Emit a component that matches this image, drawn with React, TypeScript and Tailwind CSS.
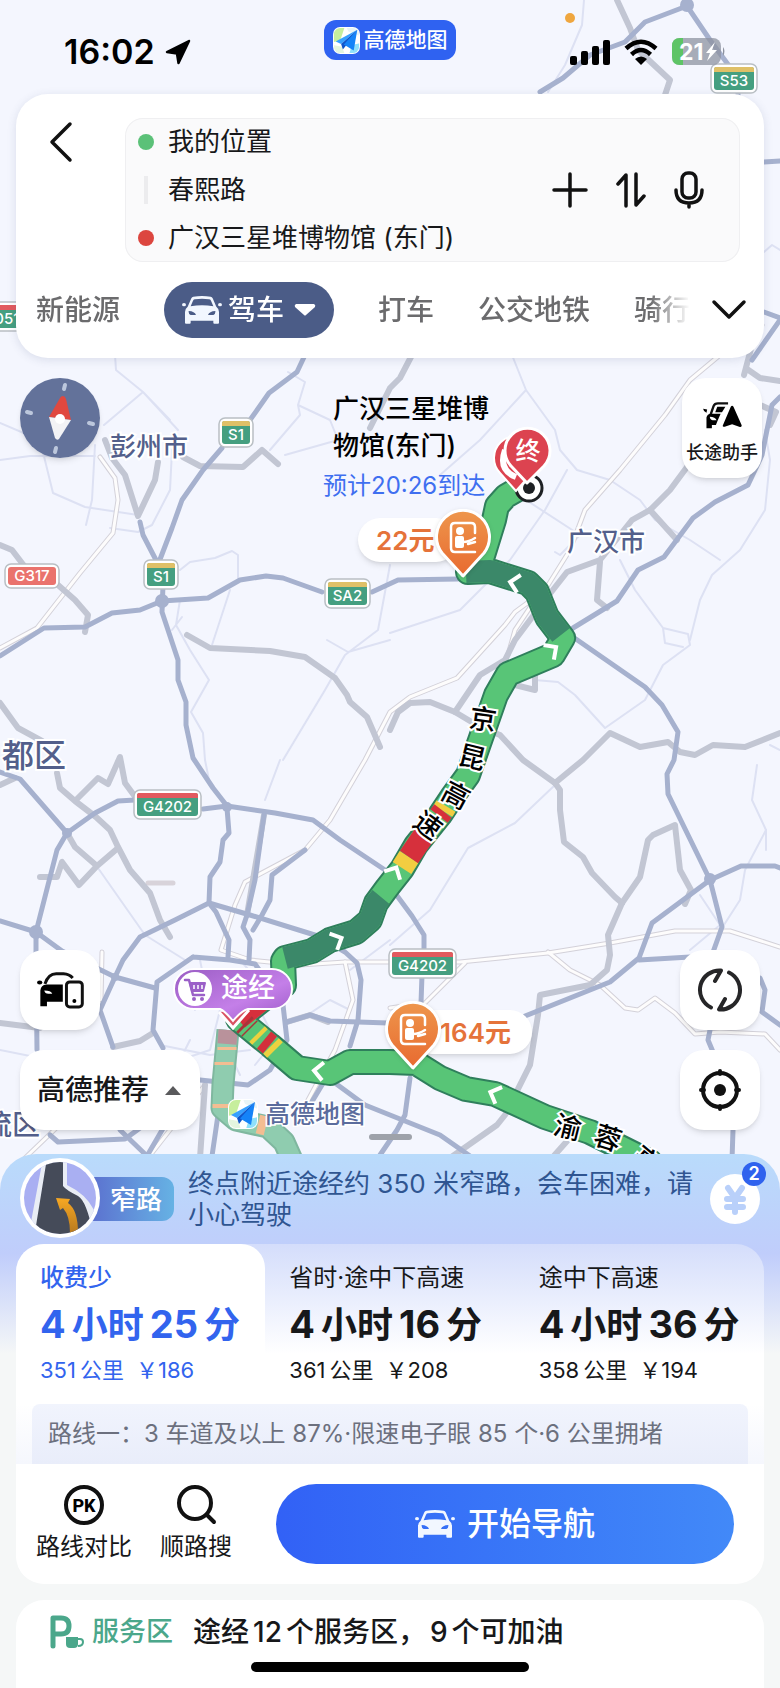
import { useState } from 'react';

type Mark = { x: number; y: number; rotate: number };

type Shield = {
  code: string;
  x: number;
  y: number;
  width: number;
  kind: 'province' | 'national' | 'road';
};

type RouteOption = {
  id: string;
  label: string;
  hours: number;
  minutes: number;
  distance: number;
  toll: number;
};

const EXPRESSWAYS = [
  'M305 355L297 372L269 393L250 420M222 448L203 470L182 500L172 528L159 562M140 522L143 535L157 562',
  'M163 585L162 612L178 660L178 680L186 702L186 725L193 758L213 788L227 806',
  'M0 656L44 628L85 627L112 613L140 610L162 601L208 598L240 580L266 576L283 578L322 592M372 592L398 580L458 579',
  'M573 628L617 601L638 570L664 557L693 518L715 502L748 485L762 455L772 405L780 397',
  'M573 637L645 687L662 705L678 732L674 760L667 774L668 794L710 880L722 927L712 955',
  'M710 880L741 866L775 866L780 868M710 880L652 923L639 958L610 982L525 1016M639 960L690 957',
  'M710 1030L708 1040L713 1052M733 1130L732 1160M760 978L765 990L762 1012L780 1025',
  'M395 893L412 916L424 935L424 948M422 975L421 1003M410 1078L405 1115L397 1130L380 1155',
  'M0 772L20 779L67 833L95 813L118 801L135 800M203 809L227 806L275 813L313 820L340 840L385 870',
  'M67 833L57 850L48 885L36 932L36 960L37 1050M36 932L0 921M36 932L62 951L115 977L155 988',
  'M227 808L229 833L223 840L220 862L210 877L209 903L216 912L222 925L229 940L228 957',
  'M264 815L255 880L247 915L243 927L250 940L249 960M305 850L272 875L270 900L262 915L253 930',
  'M115 977L123 960L140 937L175 920L209 903L250 915L318 936L345 952L357 963L361 980L358 1020L350 1046',
  'M193 957L157 982L153 1030L163 1048M193 957L230 960L255 964L270 985L283 1005L287 1040L270 1070L248 1085L200 1080',
  'M115 977L100 1010L113 1047M287 1022L310 1015L330 1021L358 1022L388 1023',
  'M325 1080L310 1105M335 1083L365 1105L390 1115L440 1135L470 1156',
  'M50 1135L58 1142L125 1139L140 1128M120 1130L147 1156L165 1125M218 1115L212 1156',
  'M540 92L563 78L590 55L625 42L645 22L687 6L710 40L738 78L738 96M683 -4L687 6M764 162L780 161M764 312L780 318M780 320L752 360',
];

const TRUNK_ROADS = [
  'M105 440L112 458L125 475L138 516L155 480L158 462M183 457L200 466L243 467L262 450L278 464',
  'M0 545L12 550L25 567M58 585L75 600L88 615L85 632M0 703L18 728L42 741',
  'M187 635L210 648L270 651L305 657L335 678L347 695L350 702L367 717L380 747M370 428L390 388L400 378L412 355',
  'M752 345L744 375M747 369L760 378L780 381M760 405L776 412L770 425',
  'M687 467L670 490L650 510L632 520L612 545L600 560L567 572L545 600L515 640L505 660L480 675L455 712',
  'M650 510L677 540M600 562L597 600L607 608M515 685L535 690L535 675',
  'M390 730L398 712L410 703L430 702L455 712L480 727L500 735L523 760L555 783L560 790L560 810L564 842L583 857L592 873L615 897L622 903',
  'M555 783L583 760L610 733L640 747L668 742L680 752L695 755L713 745L745 747L780 733',
  'M622 903L640 877L648 840L653 835L675 825L680 870L691 890L685 904',
  'M622 903L608 935L610 955L607 970L590 985L540 995L538 1015L530 1065L505 1115L497 1125L450 1158M568 1140L552 1158',
  'M57 773L60 788L75 801L96 817L110 830L118 847L130 870L150 893L160 920L170 937M75 801L98 778L108 784L120 757L125 783L136 798',
  'M67 833L75 847L97 866L118 848M97 866L79 885L62 862L57 877L40 877M0 1023L40 1028M113 1047L140 1041L153 1033',
  'M205 1085L200 1158M287 1022L310 1015L328 1022M264 815L247 915M0 785L15 778',
  'M617 0L630 28L638 50L670 80L664 98',
];

const RAILWAYS = [
  'M100 457L115 478L118 500L113 533L80 573L37 628L0 648',
  'M720 355L690 380L665 415L620 470L585 510L570 550L545 590L515 612L505 625L457 678L410 697L390 712L365 760L330 820L305 850L245 882L235 905L221 950L250 960L300 965L345 962L460 962L548 953L610 943L675 931L730 931L780 947',
  'M535 600L515 630L508 655M390 1008L425 1003L465 963M548 952L570 970L600 985L625 1008L638 1010L655 998L675 1013L695 1034L720 1032L765 1034L780 1050',
  'M345 962L353 1000L335 1050L300 1115M102 952L101 1000M148 1158L205 1085M25 1158L75 1110M730 355L762 325',
];

const LANES = [
  'M115 355L116 370L143 392L178 430M104 425L143 392L170 420M0 423L40 440L53 493L85 507L138 515M95 445L92 500L86 525M0 460L30 456L95 456',
  'M110 528L138 532L152 525L170 490L172 450M288 372L305 382L298 405L300 415L270 450M298 405L330 420L338 440L285 455',
  'M180 570L190 562L215 558L232 551L238 555L238 578M180 600L176 625L190 650L209 680L191 712L203 733L205 760M212 645L230 590M172 630L182 617',
  'M390 565L378 630L345 655L325 690L283 760M327 640L348 652L390 640',
  'M512 355L526 390L480 440L440 475M526 390L555 430L560 450L577 470L610 480L640 500L655 520L690 540L720 560M567 470L545 510L510 560L470 600L460 610L390 633',
  'M523 498L580 535L560 555L555 552M620 560L635 590L663 628L665 643L683 647M663 628L688 634L690 645L663 665L645 700L605 728L575 695L558 682L535 680',
  'M690 640L700 600L712 575L740 550L765 510L770 460L765 430M770 745L780 750M757 765L752 800L766 830L745 870L740 900L722 928',
  'M555 785L515 823L468 848L430 910L390 945M766 830L766 850M690 950L720 925L700 895',
  'M98 868L145 935L185 960M205 760L210 785M280 760L265 800M390 940L350 970M180 1000L200 990L220 1010L210 1050L180 1060M260 1010L275 1040L255 1065',
  'M584 0L582 25L565 65L548 92M764 252L772 245L780 250M0 1050L50 1060M160 1045L210 1055L250 1050M170 1080L190 1040',
  'M200 960L205 985L195 1010M230 1055L240 1075M300 1020L330 1000L350 1010M262 985L240 960',
];

const MAIN_ROUTE =
  'M520 488L506 496L497 506L494 520L481 562L468 572L490 571L528 583L537 592L547 617L563 638L553 655L508 674L496 695L476 752L468 775L452 797L440 815L416 845L402 869L387 888L376 903L370 920L356 932L330 940L312 951L285 958L283 961L284 985L262 1000L238 1019L270 1045L297 1068L330 1073L350 1062L390 1062L416 1063L440 1078L466 1089L495 1094L545 1117L590 1132L650 1162';
const DARK_UPPER = 'M466 572L490 571L528 583L537 592L547 617L561 635';
const DARK_LOWER = 'M381 897L376 903L370 920L356 932L330 940L312 951L285 958';
const ALT_ROUTE = 'M228 1030L226 1052L223 1084L222 1108L236 1120L268 1127L284 1142L292 1160';

const CHEVRONS: Mark[] = [
  { x: 515, y: 583, rotate: 192 },
  { x: 552, y: 650, rotate: -35 },
  { x: 394, y: 872, rotate: -62 },
  { x: 337, y: 940, rotate: -25 },
  { x: 319, y: 1071, rotate: 186 },
  { x: 495, y: 1094, rotate: 202 },
];

const ROAD_NAMES: (Mark & { char: string })[] = [
  { char: '京', x: 483, y: 719, rotate: 8 },
  { char: '昆', x: 472, y: 757, rotate: 14 },
  { char: '高', x: 456, y: 795, rotate: 28 },
  { char: '速', x: 428, y: 825, rotate: 36 },
  { char: '渝', x: 568, y: 1127, rotate: 14 },
  { char: '蓉', x: 608, y: 1138, rotate: 18 },
  { char: '高', x: 646, y: 1160, rotate: 40 },
];

const SHIELDS: Shield[] = [
  { code: 'S53', x: 711, y: 64, width: 46, kind: 'province' },
  { code: 'G0515', x: -22, y: 302, width: 56, kind: 'national' },
  { code: 'S1', x: 219, y: 418, width: 34, kind: 'province' },
  { code: 'S1', x: 144, y: 560, width: 34, kind: 'province' },
  { code: 'G317', x: 5, y: 564, width: 54, kind: 'road' },
  { code: 'SA2', x: 325, y: 579, width: 45, kind: 'province' },
  { code: 'G4202', x: 134, y: 790, width: 67, kind: 'national' },
  { code: 'G4202', x: 389, y: 949, width: 67, kind: 'national' },
];

const CITIES = [
  { name: '彭州市', x: 110, y: 456, size: 26 },
  { name: '广汉市', x: 567, y: 551, size: 26 },
  { name: '都区', x: 2, y: 767, size: 32 },
  { name: '流区', x: -16, y: 1135, size: 28 },
];

const ROUTES: RouteOption[] = [
  { id: 'cheap', label: '收费少', hours: 4, minutes: 25, distance: 351, toll: 186 },
  { id: 'fast', label: '省时·途中下高速', hours: 4, minutes: 16, distance: 361, toll: 208 },
  { id: 'exit', label: '途中下高速', hours: 4, minutes: 36, distance: 358, toll: 194 },
];

function CarIcon({ className }: { className?: string }) {
  return (
    <svg viewBox="0 0 120 84" className={className} fill="currentColor" aria-hidden="true">
      <path
        fillRule="evenodd"
        d="M34 2Q60-2 86 2Q90 3 92 7L103 32Q111 38 111 48V80Q111 83 108 83H97Q94 83 94 80V74H26V80Q26 83 23 83H12Q9 83 9 80V48Q9 38 17 32L28 7Q30 3 34 2ZM39 10Q35 10 33 14L26 31Q60 25 94 31L87 14Q85 10 81 10Q60 7 39 10ZM20 45Q19 56 26 57H42Q38 46 20 45ZM100 45Q101 56 94 57H78Q82 46 100 45Z"
      />
      <ellipse cx="6" cy="26" rx="6" ry="5" />
      <ellipse cx="114" cy="26" rx="6" ry="5" />
    </svg>
  );
}

function AmapLogo({ className }: { className?: string }) {
  return (
    <svg viewBox="0 0 30 30" className={className} aria-hidden="true">
      <defs>
        <clipPath id="logo-clip">
          <rect x="1" y="1" width="28" height="28" rx="7" />
        </clipPath>
      </defs>
      <rect width="30" height="30" rx="8" fill="#fff" />
      <g clipPath="url(#logo-clip)">
        <path d="M0 0H13L8 15L0 17Z" fill="#c6ee9d" />
        <path d="M15 0H30V10L17 5Z" fill="#e8f4f6" />
        <path d="M18 30L21 20L30 18V30Z" fill="#8fe0fb" />
        <path d="M0 20L10 22L13 30H0Z" fill="#e3f5df" />
      </g>
      <path d="M27 3L3 16L9 19Z" fill="#36a0ff" />
      <path d="M27 3L9 19L11 25L14 21Z" fill="#0f55c9" />
      <path d="M27 3L12 19.500L23 26Z" fill="#1583f8" />
    </svg>
  );
}

function RoadShield({ code, x, y, width, kind }: Shield) {
  const body = kind === 'road' ? '#ea736d' : '#459f80';
  const band = kind === 'national' ? '#e25a5e' : '#dfc067';
  const height = kind === 'road' ? 24 : 29;
  return (
    <g transform={`translate(${x} ${y})`}>
      <rect width={width} height={height} rx="6" fill="#fff" stroke="#b9bfc4" strokeWidth="1.500" />
      <rect x="3" y="3" width={width - 6} height={height - 6} rx="3" fill={body} />
      {kind !== 'road' && <path d={`M3 8V5Q3 3 5 3H${width - 5}Q${width - 3} 3 ${width - 3} 5V8Z`} fill={band} />}
      <text
        x={width / 2}
        y={kind === 'road' ? 17 : 22}
        textAnchor="middle"
        fontSize="15"
        fontWeight="500"
        fill="#fff"
      >
        {code}
      </text>
    </g>
  );
}

function TollPin() {
  return (
    <svg viewBox="0 0 60 70" className="h-[70px] w-[60px] drop-shadow" aria-hidden="true">
      <defs>
        <linearGradient id="toll" x1="0" y1="0" x2="0" y2="1">
          <stop offset="0" stopColor="#ee964c" />
          <stop offset="1" stopColor="#e86a30" />
        </linearGradient>
      </defs>
      <path
        d="M30 67L9 44A26.500 26.500 0 1 1 51 44Z"
        fill="url(#toll)"
        stroke="#fff"
        strokeWidth="3"
        strokeLinejoin="round"
      />
      <path d="M42 24V18Q42 14 38 14H22Q18 14 18 18V39Q18 43 22 43H42" fill="none" stroke="#fff" strokeWidth="2.500" strokeLinecap="round" />
      <circle cx="27" cy="22" r="4" fill="#fff" />
      <rect x="22" y="27" width="9" height="12" rx="2" fill="#fff" />
      <path d="M30 33Q36 33 42 29M35 35L42 33" fill="none" stroke="#fff" strokeWidth="2.500" strokeLinecap="round" />
    </svg>
  );
}

function MapCanvas() {
  return (
    <div className="absolute left-1/2 top-0 h-[1190px] w-[780px] -translate-x-1/2">
      <svg viewBox="0 0 780 1190" className="h-[1190px] w-[780px]" role="img" aria-label="路线地图">
        <rect width="780" height="1190" fill="#f4f6fe" />
        <g fill="none" strokeLinejoin="round" strokeLinecap="round">
          <g stroke="#dde1f3" strokeWidth="2">
            {LANES.map((d) => <path key={d} d={d} />)}
          </g>
          <g stroke="#d3d1d9" strokeWidth="5">
            {RAILWAYS.map((d) => <path key={d} d={d} />)}
          </g>
          <g stroke="#fdfcfc" strokeWidth="3">
            {RAILWAYS.map((d) => <path key={d} d={d} />)}
          </g>
          <path d="M148 883H173" stroke="#d8d3da" strokeWidth="5" />
          <g stroke="#c2c6d3" strokeWidth="6">
            {TRUNK_ROADS.map((d) => <path key={d} d={d} />)}
          </g>
          <g stroke="#a6b1ce" strokeWidth="5">
            {EXPRESSWAYS.map((d) => <path key={d} d={d} />)}
          </g>
        </g>
        <g fill="#a6b1ce">
          <circle cx="162" cy="601" r="7" />
          <circle cx="67" cy="833" r="5" />
          <circle cx="36" cy="932" r="7" />
          <circle cx="227" cy="807" r="5" />
          <circle cx="710" cy="879" r="6" />
          <circle cx="687" cy="5" r="7" />
          <circle cx="115" cy="977" r="4" />
        </g>

        {CITIES.map((city) => (
          <text
            key={city.name}
            x={city.x}
            y={city.y}
            fontSize={city.size}
            fontWeight="500"
            fill="#535f8b"
            stroke="#fff"
            strokeWidth="4"
            paintOrder="stroke"
          >
            {city.name}
          </text>
        ))}

        <g fill="none" strokeLinejoin="round">
          <path d={ALT_ROUTE} stroke="#7fb79f" strokeWidth="23" />
          <path d={ALT_ROUTE} stroke="#8fccaf" strokeWidth="19" />
          <path d="M228 1030L227 1044" stroke="#b9929b" strokeWidth="19" />
          <path d="M227 1047V1050M224 1062V1065M222 1104V1108M258 1124L266 1126" stroke="#f3bd92" strokeWidth="19" />

          <path d={MAIN_ROUTE} stroke="#2f7f5c" strokeWidth="26" strokeLinecap="round" />
          <path d={MAIN_ROUTE} stroke="#58c577" strokeWidth="22" strokeLinecap="round" />
          <path d={DARK_UPPER} stroke="#3b8869" strokeWidth="22" />
          <path d={DARK_LOWER} stroke="#3b8869" strokeWidth="22" />
          <path d="M409 857L402 868" stroke="#f2cd41" strokeWidth="22" />
          <path d="M424 835L409 857" stroke="#d6303c" strokeWidth="22" />
          <path d="M446 806L443 811" stroke="#f2cd41" strokeWidth="22" />
          <path d="M443 811L439 816" stroke="#d6303c" strokeWidth="22" />
          <path d="M262 1000L238 1019" stroke="#d6303c" strokeWidth="22" />
          <path d="M244 1024L246 1026M249 1028L250 1029" stroke="#a8353a" strokeWidth="22" />
          <path d="M257 1034L260 1037M271 1046L275 1050" stroke="#ecd13f" strokeWidth="22" />
          <path d="M264 1040L270 1045" stroke="#d3303b" strokeWidth="22" />
        </g>

        {CHEVRONS.map((mark) => (
          <path
            key={`${mark.x}-${mark.y}`}
            transform={`translate(${mark.x} ${mark.y}) rotate(${mark.rotate})`}
            d="M-4-9L5 0L-4 9"
            fill="none"
            stroke="#fff"
            strokeWidth="4"
          />
        ))}

        {ROAD_NAMES.map((name) => (
          <text
            key={`${name.x}-${name.char}`}
            transform={`translate(${name.x} ${name.y}) rotate(${name.rotate})`}
            y="10"
            textAnchor="middle"
            fontSize="27"
            fontWeight="500"
            fill="#000"
            stroke="#fff"
            strokeWidth="4"
            paintOrder="stroke"
          >
            {name.char}
          </text>
        ))}

        {SHIELDS.map((shield) => (
          <RoadShield key={`${shield.code}-${shield.x}`} {...shield} />
        ))}

        <circle cx="529" cy="488" r="13" fill="#fff" stroke="#1d2023" strokeWidth="3" />
        <circle cx="529" cy="488" r="6" fill="#1d2023" />
        <path d="M516 491L500 473A22 22 0 1 1 532 473Z" fill="#dc4350" stroke="#fff" strokeWidth="2" />
        <path d="M505 450Q498 470 516 477" fill="none" stroke="#fff" strokeWidth="6" />
        <path d="M527 483L511 466A22.500 22.500 0 1 1 544 466Z" fill="#dc4350" stroke="#fff" strokeWidth="3" strokeLinejoin="round" />
        <text x="528" y="460" textAnchor="middle" fontSize="25" fontWeight="500" fill="#fff">
          终
        </text>
        <rect x="369" y="1134" width="43" height="6" rx="3" fill="#9ea2aa" />
        <circle cx="570" cy="18" r="5" fill="#efa63f" />
      </svg>

      <div className="absolute left-[333px] top-[390px] text-[26px] font-medium leading-[37px] text-black">
        <p>广汉三星堆博</p>
        <p>物馆(东门)</p>
      </div>
      <p className="absolute left-[323px] top-[470px] text-2xl leading-8 text-[#3f6ff0]">预计20:26到达</p>

      <div className="absolute left-[358px] top-[518px] flex h-11 w-[100px] items-center rounded-full bg-white pl-[18px] text-[26px] font-semibold text-[#e5733a] shadow-md">
        22元
      </div>
      <div className="absolute left-[433px] top-[509px]">
        <TollPin />
      </div>
      <div className="absolute left-[410px] top-[1010px] flex h-11 w-[122px] items-center rounded-full bg-white pl-[30px] text-[26px] font-semibold text-[#e5733a] shadow-md">
        164元
      </div>
      <div className="absolute left-[383px] top-[1001px]">
        <TollPin />
      </div>

      <div className="absolute left-[173px] top-[968px]">
        <svg viewBox="0 0 120 62" className="h-[62px] w-[120px]" aria-hidden="true">
          <defs>
            <linearGradient id="via" x1="0" y1="0" x2="1" y2="1">
              <stop offset="0" stopColor="#9a5dc4" />
              <stop offset="0.600" stopColor="#c47fe8" />
              <stop offset="1" stopColor="#9a59c6" />
            </linearGradient>
          </defs>
          <path d="M46 44L60 60L76 42" fill="#d95362" stroke="#fff" strokeWidth="3" />
          <path
            d="M21 1H99A20 20 0 0 1 99 41H75Q68 43 60 53Q52 43 47 41H21A20 20 0 0 1 21 1Z"
            fill="url(#via)"
            stroke="#fff"
            strokeWidth="2"
          />
          <circle cx="22" cy="21" r="17" fill="#fff" />
          <path d="M12 12H16L20 27H31" fill="none" stroke="#9b60c8" strokeWidth="2.500" strokeLinejoin="round" strokeLinecap="round" />
          <path d="M17 15H32L30 23H19Z" fill="#9b60c8" stroke="#9b60c8" strokeWidth="2" strokeLinejoin="round" />
          <path d="M21 17V21M25 17V21M29 17V21" stroke="#fff" strokeWidth="1.500" />
          <circle cx="21" cy="31" r="2" fill="#9b60c8" />
          <circle cx="29" cy="31" r="2" fill="#9b60c8" />
        </svg>
        <span className="absolute left-12 top-0.5 text-[27px] font-medium leading-9 text-white">途经</span>
      </div>

      <div className="absolute left-[228px] top-[1099px] flex items-center gap-1.5">
        <AmapLogo className="size-[30px]" />
        <svg viewBox="0 0 104 30" className="h-[30px] w-[104px]" aria-hidden="true">
          <text x="1" y="24" fontSize="25" fontWeight="500" fill="#5b6c9d" stroke="#fff" strokeWidth="3" paintOrder="stroke">
            高德地图
          </text>
        </svg>
      </div>
    </div>
  );
}

function StatusBar() {
  return (
    <div className="grid h-[94px] grid-cols-[1fr_auto_1fr] items-start px-[54px]">
      <div className="flex items-center gap-2.5 pl-2.5 pt-8">
        <span className="text-[34px] font-semibold leading-10 text-black">16:02</span>
        <svg viewBox="0 0 26 26" className="size-[26px]" aria-hidden="true">
          <path d="M24 2L2 13L12 14.500L13.500 24Z" fill="#000" stroke="#000" strokeWidth="2.500" strokeLinejoin="round" />
        </svg>
      </div>
      <div className="mt-5 flex h-10 w-[132px] items-center justify-center gap-1 rounded-xl bg-[#2f62f1]">
        <AmapLogo className="size-[27px]" />
        <span className="text-[21px] font-medium leading-8 text-white">高德地图</span>
      </div>
      <div className="flex items-center justify-end gap-3.5 pt-[38px]">
        <svg viewBox="0 0 40 26" className="h-[26px] w-10" aria-hidden="true">
          <rect x="0" y="17" width="7" height="9" rx="2" />
          <rect x="11" y="12" width="7" height="14" rx="2" />
          <rect x="22" y="7" width="7" height="19" rx="2" />
          <rect x="33" y="1" width="7" height="25" rx="2" />
        </svg>
        <svg viewBox="0 0 34 26" className="h-[26px] w-[34px]" aria-hidden="true">
          <path d="M2 9.500Q17-4 32 9.500M7.500 15.500Q17 6.500 26.500 15.500" fill="none" stroke="#000" strokeWidth="4.500" />
          <path d="M11 20Q17 15 23 20L17 26Z" />
        </svg>
        <svg viewBox="0 0 54 27" className="h-[27px] w-[54px]" aria-label="电量 21%">
          <rect width="49" height="27" rx="8" fill="#8d93a0" fillOpacity="0.75" />
          <path d="M11 0H8Q0 0 0 8V19Q0 27 8 27H11Z" fill="#5ec466" />
          <path d="M51 9Q54 13 51 18Z" fill="#8d93a0" />
          <text x="7" y="22" fontSize="23" fontWeight="700" fill="#fff">21</text>
          <path d="M43 4L34 15H38L35 23L45 12H40Z" fill="#fff" />
        </svg>
      </div>
    </div>
  );
}

function TripCard() {
  const [mode, setMode] = useState('驾车');
  const stops = [
    { label: '起点', value: '我的位置', dot: 'size-4 rounded-full bg-[#5bc178]' },
    { label: '途经点', value: '春熙路', dot: 'h-7 w-1 bg-[#ececee]' },
    { label: '终点', value: '广汉三星堆博物馆 (东门)', dot: 'size-4 rounded-full bg-[#dc463f]' },
  ];

  return (
    <section className="mx-4 rounded-[32px] bg-white pb-5 pt-6 shadow-[0_2px_10px_rgba(60,70,110,0.14)]">
      <div className="flex items-start pr-6">
        <button type="button" aria-label="返回" className="flex h-12 w-[109px] items-center pl-8">
          <svg viewBox="0 0 26 44" className="h-11 w-[26px]" fill="none" stroke="#111" strokeWidth="3.500" strokeLinecap="round" strokeLinejoin="round">
            <path d="M22 4L4 22L22 40" />
          </svg>
        </button>
        <div className="flex min-w-0 flex-1 items-center rounded-[18px] bg-[#fafafb] pl-[13px] pr-9 shadow-[inset_0_0_0_1px_#efeff1]">
          <div className="min-w-0 flex-1">
            {stops.map((stop) => (
              <div key={stop.label} className="flex h-12 items-center gap-3.5">
                <span className="flex w-4 justify-center">
                  <span className={stop.dot} />
                </span>
                <input
                  type="text"
                  aria-label={stop.label}
                  defaultValue={stop.value}
                  className="min-w-0 flex-1 bg-transparent text-[26px] leading-9 text-[#17181a] outline-none"
                />
              </div>
            ))}
          </div>
          <div className="flex items-center gap-7 text-[#111]">
            <button type="button" aria-label="添加途经点">
              <svg viewBox="0 0 36 40" className="h-10 w-9" fill="none" stroke="currentColor" strokeWidth="3.500" strokeLinecap="round">
                <path d="M18 4V36M2 20H34" />
              </svg>
            </button>
            <button type="button" aria-label="交换起终点">
              <svg viewBox="0 0 30 40" className="h-10 w-[30px]" fill="none" stroke="currentColor" strokeWidth="3.500" strokeLinecap="round" strokeLinejoin="round">
                <path d="M10 36V5L2 14M20 4V35L28 26" />
              </svg>
            </button>
            <button type="button" aria-label="语音输入">
              <svg viewBox="0 0 30 40" className="h-10 w-[30px]" fill="none" stroke="currentColor" strokeWidth="3.500" strokeLinecap="round">
                <rect x="8" y="3" width="14" height="25" rx="6" />
                <path d="M2 20Q2 33 15 33Q28 33 28 20M15 33V37" />
              </svg>
            </button>
          </div>
        </div>
      </div>

      <div className="mt-5 flex items-center">
        <div className="flex min-w-0 flex-1 items-center gap-11 overflow-hidden whitespace-nowrap pl-5 text-[28px] font-medium leading-9 text-[#6b6b6d] [mask-image:linear-gradient(to_right,#000_94%,transparent)]">
          {['新能源', '驾车', '打车', '公交地铁', '骑行'].map((name) =>
            name === mode ? (
              <button
                key={name}
                type="button"
                aria-pressed="true"
                className="flex h-14 shrink-0 items-center gap-1.5 rounded-full bg-[#4b5c87] px-[18px] text-white"
              >
                <CarIcon className="h-7 w-10 text-[#f2f7ff]" />
                {name}
                <svg viewBox="0 0 22 14" className="ml-1 h-3.5 w-[22px]" aria-hidden="true">
                  <path d="M2 1H20Q22 2 21 4L12 12Q11 13 10 12L1 4Q0 2 2 1Z" fill="#fff" />
                </svg>
              </button>
            ) : (
              <button key={name} type="button" className="shrink-0" onClick={() => setMode(name)}>
                {name}
              </button>
            ),
          )}
        </div>
        <button type="button" aria-label="更多出行方式" className="ml-5 mr-4 flex h-14 w-[38px] items-center justify-center">
          <svg viewBox="0 0 36 22" className="h-[22px] w-9" fill="none" stroke="#111" strokeWidth="3.500" strokeLinecap="round" strokeLinejoin="round">
            <path d="M3 3L18 18L33 3" />
          </svg>
        </button>
      </div>
    </section>
  );
}

function MapControls() {
  return (
    <>
      <div className="flex items-start justify-between pl-5 pr-[18px] pt-5">
        <button type="button" aria-label="指南针" className="rounded-full shadow-md">
          <svg viewBox="0 0 80 80" className="size-20" aria-hidden="true">
            <circle cx="40" cy="40" r="40" fill="#63729a" />
            <path d="M45 7L44 11M36 70L35 74M7 34L11 35M69 45L73 46" stroke="#bcc7dc" strokeWidth="4" strokeLinecap="round" />
            <path d="M43 18Q45 18 46 21L51 42L29 39L40 20Q41 18 43 18Z" fill="#e0483f" />
            <path d="M29 39L51 42L39 61Q37 63 35 60Z" fill="#f3f3f5" />
            <circle cx="40" cy="41" r="5" fill="#fff" />
          </svg>
        </button>
        <button type="button" className="flex h-[100px] w-20 flex-col items-center gap-3 rounded-3xl bg-white pt-6 shadow-md">
          <svg viewBox="0 0 115 80" className="h-[27px] w-[39px]" aria-hidden="true">
            <path d="M22 38L31 12Q34 4 44 4H74" fill="none" stroke="#111" strokeWidth="7" />
            <path d="M42 14H66L56 30H36Z" />
            <path fillRule="evenodd" d="M10 46Q12 36 24 35H52L48 44L42 58L38 68H26V78H10ZM20 44Q20 53 28 54H40Q36 45 20 44Z" />
            <path d="M0 20L12 22L10 32Q2 30 0 20Z" />
            <path d="M82 14Q86 8 90 14L114 68Q116 76 107 73L86 66L64 73Q56 75 59 68Z" />
          </svg>
          <span className="text-[18px] font-medium leading-6 text-[#17181a]">长途助手</span>
        </button>
      </div>

      <div className="mt-auto flex items-end justify-between px-5 pb-[60px]">
        <div className="flex flex-col items-start gap-5">
          <button type="button" aria-label="手车互联" className="flex size-20 items-center justify-center rounded-3xl bg-white shadow-md">
            <svg viewBox="0 0 142 112" className="h-[37px] w-[47px]" aria-hidden="true">
              <path d="M24 36Q34 5 58 5H80Q98 6 108 18" fill="none" stroke="#111" strokeWidth="9" />
              <ellipse cx="8" cy="32" rx="8" ry="6" />
              <path fillRule="evenodd" d="M10 56Q12 40 28 38H78V90H30V104H10ZM22 56Q24 66 34 66H46Q42 56 22 56Z" />
              <rect x="89" y="30" width="48" height="76" rx="10" fill="#fff" stroke="#111" strokeWidth="9" />
              <circle cx="113" cy="88" r="6" />
            </svg>
          </button>
          <button type="button" className="flex h-20 items-center gap-4 rounded-3xl bg-white px-[17px] shadow-md">
            <span className="text-[28px] font-medium leading-10 text-[#17181a]">高德推荐</span>
            <svg viewBox="0 0 16 9" className="mr-0.5 h-[9px] w-4" aria-hidden="true">
              <path d="M0 9L8 0L16 9Z" fill="#5a5a5c" />
            </svg>
          </button>
        </div>
        <div className="flex flex-col gap-5">
          <button type="button" aria-label="刷新路线" className="flex size-20 items-center justify-center rounded-3xl bg-white shadow-md">
            <svg viewBox="0 0 46 46" className="size-[46px]" fill="none" stroke="#262628" strokeWidth="4" strokeLinecap="round" strokeLinejoin="round">
              <path d="M14 40.500A19.500 19.500 0 0 1 24 3.500L18 14M32 5.500A19.500 19.500 0 0 1 22 42.500L28 32" />
            </svg>
          </button>
          <button type="button" aria-label="定位" className="flex size-20 items-center justify-center rounded-3xl bg-white shadow-md">
            <svg viewBox="0 0 44 44" className="size-11" fill="none" stroke="#111" strokeWidth="4" strokeLinecap="round">
              <circle cx="22" cy="22" r="17" />
              <path d="M22 3V6M22 38V41M3 22H6M38 22H41" />
              <circle cx="22" cy="22" r="6" fill="#111" stroke="none" />
            </svg>
          </button>
        </div>
      </div>
    </>
  );
}

function WarningBanner() {
  return (
    <div className="flex h-[90px] items-start px-5 pt-1">
      <svg viewBox="0 0 80 80" className="relative z-10 size-20 shrink-0" aria-hidden="true">
        <defs>
          <clipPath id="lane-clip">
            <circle cx="40" cy="40" r="36" />
          </clipPath>
          <linearGradient id="lane-arrow" x1="0" y1="0" x2="0" y2="1">
            <stop offset="0" stopColor="#f7a823" />
            <stop offset="1" stopColor="#b87a1f" />
          </linearGradient>
        </defs>
        <circle cx="40" cy="40" r="40" fill="#fff" />
        <g clipPath="url(#lane-clip)">
          <rect width="80" height="80" fill="#a9aff2" />
          <path d="M23 0H47V27Q66 36 74 52V80H8Z" fill="#e9edf5" />
          <path d="M27 0H43V28Q46 32 58 38Q67 43 74 80H14Z" fill="#454b59" />
          <path d="M36 40L50 41L48 45Q58 52 58 75H50Q50 58 43 50L40 52Z" fill="url(#lane-arrow)" />
        </g>
      </svg>
      <span className="-ml-5 mt-[19px] flex h-11 shrink-0 items-center rounded-xl bg-linear-to-r from-[#5a68cc] to-[#66b2e4] pl-[30px] pr-3 text-[26px] font-medium text-white">
        窄路
      </span>
      <p className="ml-3.5 mt-2.5 flex-1 text-[26px] leading-[31px] text-[#2f5591]">
        终点附近途经约 350 米窄路，会车困难，请小心驾驶
      </p>
      <button type="button" aria-label="优惠 2" className="relative mt-4 size-[50px] shrink-0 rounded-full bg-white">
        <svg viewBox="0 0 50 50" className="size-[50px]" fill="none" stroke="#b9d0fa" strokeWidth="6" strokeLinecap="round" aria-hidden="true">
          <path d="M18 14L25 24L32 14M25 24V38M17 25H33M17 33H33" />
        </svg>
        <span className="absolute -right-1.5 -top-3 flex size-6 items-center justify-center rounded-full bg-[#2f62ee] text-lg font-semibold leading-none text-white">
          2
        </span>
      </button>
    </div>
  );
}

function RouteTab({ route, active, onSelect }: { route: RouteOption; active: boolean; onSelect: () => void }) {
  return (
    <button
      type="button"
      onClick={onSelect}
      className={
        active
          ? 'whitespace-nowrap rounded-t-3xl bg-white px-6 pb-4 pt-[18px] text-left text-[#3264ee]'
          : 'whitespace-nowrap px-6 pb-4 pt-[18px] text-left text-[#17181a]'
      }
    >
      <span className={active ? 'block text-2xl font-medium leading-8' : 'block text-2xl leading-8'}>{route.label}</span>
      <span className="mt-1.5 flex h-12 items-baseline gap-1.5 text-[36px] font-semibold leading-[48px]">
        <span className="text-[38px] font-bold">{route.hours}</span>小时
        <span className="text-[38px] font-bold">{route.minutes}</span>分
      </span>
      <span className="mt-1 flex h-9 items-baseline gap-1 text-[22px] leading-9">
        <span>{route.distance}</span>公里
        <span className="ml-2">￥{route.toll}</span>
      </span>
    </button>
  );
}

function ActionBar() {
  return (
    <div className="flex items-center rounded-b-[28px] bg-white py-5 pl-5 pr-[30px]">
      <button type="button" className="flex flex-col items-center gap-1 text-2xl leading-[34px] text-[#17181a]">
        <svg viewBox="0 0 42 42" className="size-[42px]" aria-hidden="true">
          <circle cx="21" cy="21" r="18" fill="none" stroke="#111" strokeWidth="4" />
          <text x="21" y="28" textAnchor="middle" fontSize="18" fontWeight="800" fontFamily="Roboto">PK</text>
        </svg>
        路线对比
      </button>
      <button type="button" className="ml-7 flex flex-col items-center gap-1 text-2xl leading-[34px] text-[#17181a]">
        <svg viewBox="0 0 42 42" className="size-[42px]" fill="none" stroke="#111" strokeWidth="4" strokeLinecap="round" aria-hidden="true">
          <circle cx="20" cy="19" r="16" />
          <path d="M32 31L39 38" />
        </svg>
        顺路搜
      </button>
      <button
        type="button"
        className="ml-11 flex h-20 flex-1 items-center justify-center gap-3 rounded-full bg-linear-to-r from-[#3261f6] to-[#4289f8] text-[32px] font-medium text-white"
      >
        <CarIcon className="h-7 w-10 text-[#f2f7ff]" />
        开始导航
      </button>
    </div>
  );
}

export default function App() {
  const [selected, setSelected] = useState('cheap');

  return (
    <main
      lang="zh-CN"
      className="flex min-h-screen flex-col overflow-hidden bg-[#f5f7f7] font-[Inter,'Noto_Sans_CJK_SC',sans-serif]"
    >
      <section className="relative flex flex-1 flex-col overflow-hidden">
        <MapCanvas />
        <div className="relative flex flex-1 flex-col">
          <StatusBar />
          <TripCard />
          <MapControls />
        </div>
      </section>

      <section className="relative -mt-9 rounded-t-[36px] bg-[linear-gradient(180deg,#b9dbfb_0px,#c0cdfb_100px,#f5f7f7_200px)]">
        <WarningBanner />
        <div className="mx-4 overflow-hidden rounded-[28px] bg-[linear-gradient(180deg,#d4ddfb_0px,#ffffff_110px)]">
          <div className="grid grid-cols-3">
            {ROUTES.map((route) => (
              <RouteTab
                key={route.id}
                route={route}
                active={route.id === selected}
                onSelect={() => setSelected(route.id)}
              />
            ))}
          </div>
          <div className="bg-linear-to-b from-white to-[#f5f7fd] px-4">
            <p className="rounded-t-lg bg-linear-to-b from-[#f1f4fd] to-[#e9edfa] px-4 pb-3 pt-3 text-2xl leading-9 text-[#6c707e]">
              路线一：3 车道及以上 87%·限速电子眼 85 个·6 公里拥堵
            </p>
          </div>
          <ActionBar />
        </div>

        <div className="mx-4 mt-4 rounded-t-[28px] bg-white pb-4 pt-3">
          <div className="flex items-center pl-[34px]">
            <svg viewBox="0 0 34 34" className="size-[34px]" aria-hidden="true">
              <path d="M3 31V3H11Q19 3 19 11Q19 19 11 19H4" fill="none" stroke="#4ba78b" strokeWidth="5" strokeLinecap="round" strokeLinejoin="round" />
              <path d="M16 22H28V29Q28 33 24 33H20Q16 33 16 29Z" fill="#4ba78b" />
              <path d="M28 24H30Q33 24 33 27Q33 31 28 31" fill="none" stroke="#4ba78b" strokeWidth="2" />
            </svg>
            <span className="ml-2 text-[27px] font-medium leading-10 text-[#4ba78b]">服务区</span>
            <span className="ml-5 flex gap-1 text-[28px] font-medium leading-10 text-[#17181a]">
              途经<span>12</span>个服务区，<span>9</span>个可加油
            </span>
          </div>
          <div className="mx-auto mt-2.5 h-2.5 w-[278px] rounded-full bg-black" />
        </div>
      </section>
    </main>
  );
}
